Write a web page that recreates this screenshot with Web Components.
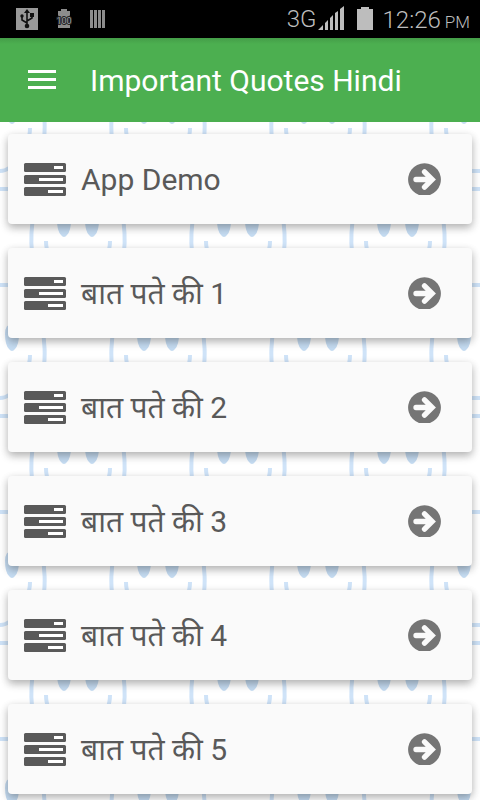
<!DOCTYPE html>
<html lang="hi"><head><meta charset="utf-8"><meta name="viewport" content="width=device-width"><title>Important Quotes Hindi</title>
<style>
body{margin:0;background:#fff;font-family:Roboto,"Noto Sans","Noto Sans Devanagari",sans-serif;min-height:100vh}
</style></head><body>
<quotes-app></quotes-app>
<script>
const define=(name,html)=>customElements.define(name,class extends HTMLElement{
  constructor(){super();this.attachShadow({mode:'open'}).innerHTML=html;}
});
define('status-bar',`<style>
:host{display:flex;align-items:center;height:38px;padding:0 10px 0 16px;background:#000;color:#bdbdbd;box-sizing:border-box}
.left{display:flex;gap:18px;align-items:center;flex:1}
svg{display:block}
.net{font-size:24px;font-weight:300;line-height:36px}
.right{display:flex;align-items:center}
.bat{margin:0 10px 0 12px}
.clock{font-size:24px;font-weight:300;line-height:34px;padding-top:4px;white-space:nowrap}
small{font-size:17px;margin-left:4px}
</style>
<div class="left">
<svg width="22" height="22" viewBox="0 0 22 22"><path fill="#999" d="M0 0h22v22H0z"/><g stroke="#111" stroke-width="1.6" fill="none"><path d="M11 18V4M11 15L6 12V8M11 13l5-3V7"/></g><g fill="#111"><path d="M11 1l3 4H8z"/><circle cx="11" cy="18" r="2.3"/><circle cx="6" cy="8" r="1.7"/><path d="M14 5h4v4h-4z"/></g></svg>
<svg width="16" height="20" viewBox="0 0 16 20"><path fill="#8c8c8c" d="M5 0h6v2h3v4l-1 2v5l1 2v4H2v-4l1-2V8L2 6V2h3z"/><text x="8" y="15" text-anchor="middle" font-family="Roboto,sans-serif" font-size="9" fill="#9a9fa4" stroke="#222" stroke-width="2" paint-order="stroke">100</text></svg>
<svg width="16" height="18" viewBox="0 0 16 18"><path fill="#8c8c8c" d="M0 0h3v18H0zM4 0h3v18H4zM8 0h3v18H8zM12 0h3v18h-3z"/></svg>
</div>
<div class="right"><span class="net">3G</span>
<svg width="28" height="26" viewBox="0 0 28 26"><path fill="#bdbdbd" d="M1 24l5-5v5zM8 17l3-3v10H8zM13 12l3-3v15h-3zM18 7l3-2v19h-3zM23 3l4-3v24h-4z"/></svg>
<svg class="bat" width="16" height="25" viewBox="0 0 16 25"><path fill="#bdbdbd" d="M4 0h8v2h4v21H0V2h4z"/></svg>
<span class="clock">12:26<small>PM</small></span></div>`);
define('app-toolbar',`<style>
:host{display:flex;align-items:center;gap:34px;height:84px;padding:0 28px;background:linear-gradient(#449d48,#4caf50 6px);color:#fff;box-sizing:border-box}
button{border:0;padding:0;background:none;color:inherit;display:block}
svg{display:block}
h1{margin:0;padding-top:2px;font-size:30px;line-height:36px;font-weight:400;white-space:nowrap}
</style><button aria-label="Menu"><svg width="28" height="20" viewBox="0 0 28 20"><path fill="#fff" d="M0 0h28v3H0zM0 8h28v3H0zM0 16h28v3H0z"/></svg></button><h1><slot></slot></h1>`);
define('quote-card',`<style>
:host{display:block}
button{display:flex;align-items:center;width:100%;height:90px;padding:0 31px 0 16px;border:0;border-radius:4px;background:#fafafa;color:#595959;font:inherit;font-size:30px;line-height:40px;text-align:left;box-shadow:0 4px 8px rgba(0,0,0,.24),0 2px 8px rgba(0,0,0,.1);box-sizing:border-box}
span{flex:1;margin-left:15px;padding-top:2px;white-space:nowrap}
svg{display:block;flex:none}
</style><button>
<svg width="42" height="32" viewBox="0 0 42 32" overflow="visible"><g fill="#595959"><rect width="42" height="9" rx="1.5"/><rect y="12" width="42" height="9" rx="1.5"/><rect y="24" width="42" height="9" rx="1.5"/></g><path fill="#fff" d="M30 3h9v3h-9zM15 15h24v3H15zM24 27h15v3H24z"/></svg>
<span><slot></slot></span>
<svg width="33" height="33" viewBox="0 0 33 33"><path fill="#757575" d="M11 32A16.400 16.400 0 1 1 22 32z"/><path d="M8 16.500H22M16.500 8.800l7.700 7.700-7.700 7.700" stroke="#fafafa" stroke-width="5.300" fill="none" stroke-linecap="round"/></svg>
</button>`);
define('quotes-app',`<style>
:host{display:flex;flex-direction:column;height:100vh}
main{position:relative;flex:1;min-height:0;overflow:hidden}
.faces{position:absolute;inset:0;width:100%;height:100%}
ul{position:relative;list-style:none;margin:0;padding:12px 8px;display:grid;gap:24px}
</style><status-bar></status-bar><app-toolbar>Important Quotes Hindi</app-toolbar>
<main><svg class="faces" aria-hidden="true"><defs>
<g id="face" fill="none" stroke="#cfe3f8" stroke-width="4"><path d="M34 90Q30 112 32 130M122 90Q126 112 124 130"/><path d="M46 119q0 8 3 14M110 119q0 8-3 14"/><path d="M57 98q0-10 7-10t7 10q0 11-4 15q-3 4-6 0q-4-4-4-15zM85 98q0-10 7-10t7 10q0 11-4 15q-3 4-6 0q-4-4-4-15z" fill="#c5dcf2" stroke="none"/></g>
<pattern id="p" width="160" height="227" patternUnits="userSpaceOnUse"><use href="#face"/><use href="#face" x="-80" y="-113"/><use href="#face" x="80" y="-113"/><use href="#face" x="-80" y="114"/><use href="#face" x="80" y="114"/><path d="M0 49q5 0 9-3M150 49h10M0 67h10M150 67h10M0 163h10M150 163h10" stroke="#cfe3f8" stroke-width="4" fill="none"/></pattern></defs><rect width="100%" height="100%" fill="url(#p)"/></svg>
<ul><li><quote-card>App Demo</quote-card></li><li><quote-card>बात पते की 1</quote-card></li><li><quote-card>बात पते की 2</quote-card></li><li><quote-card>बात पते की 3</quote-card></li><li><quote-card>बात पते की 4</quote-card></li><li><quote-card>बात पते की 5</quote-card></li></ul></main>`);
</script></body></html>
